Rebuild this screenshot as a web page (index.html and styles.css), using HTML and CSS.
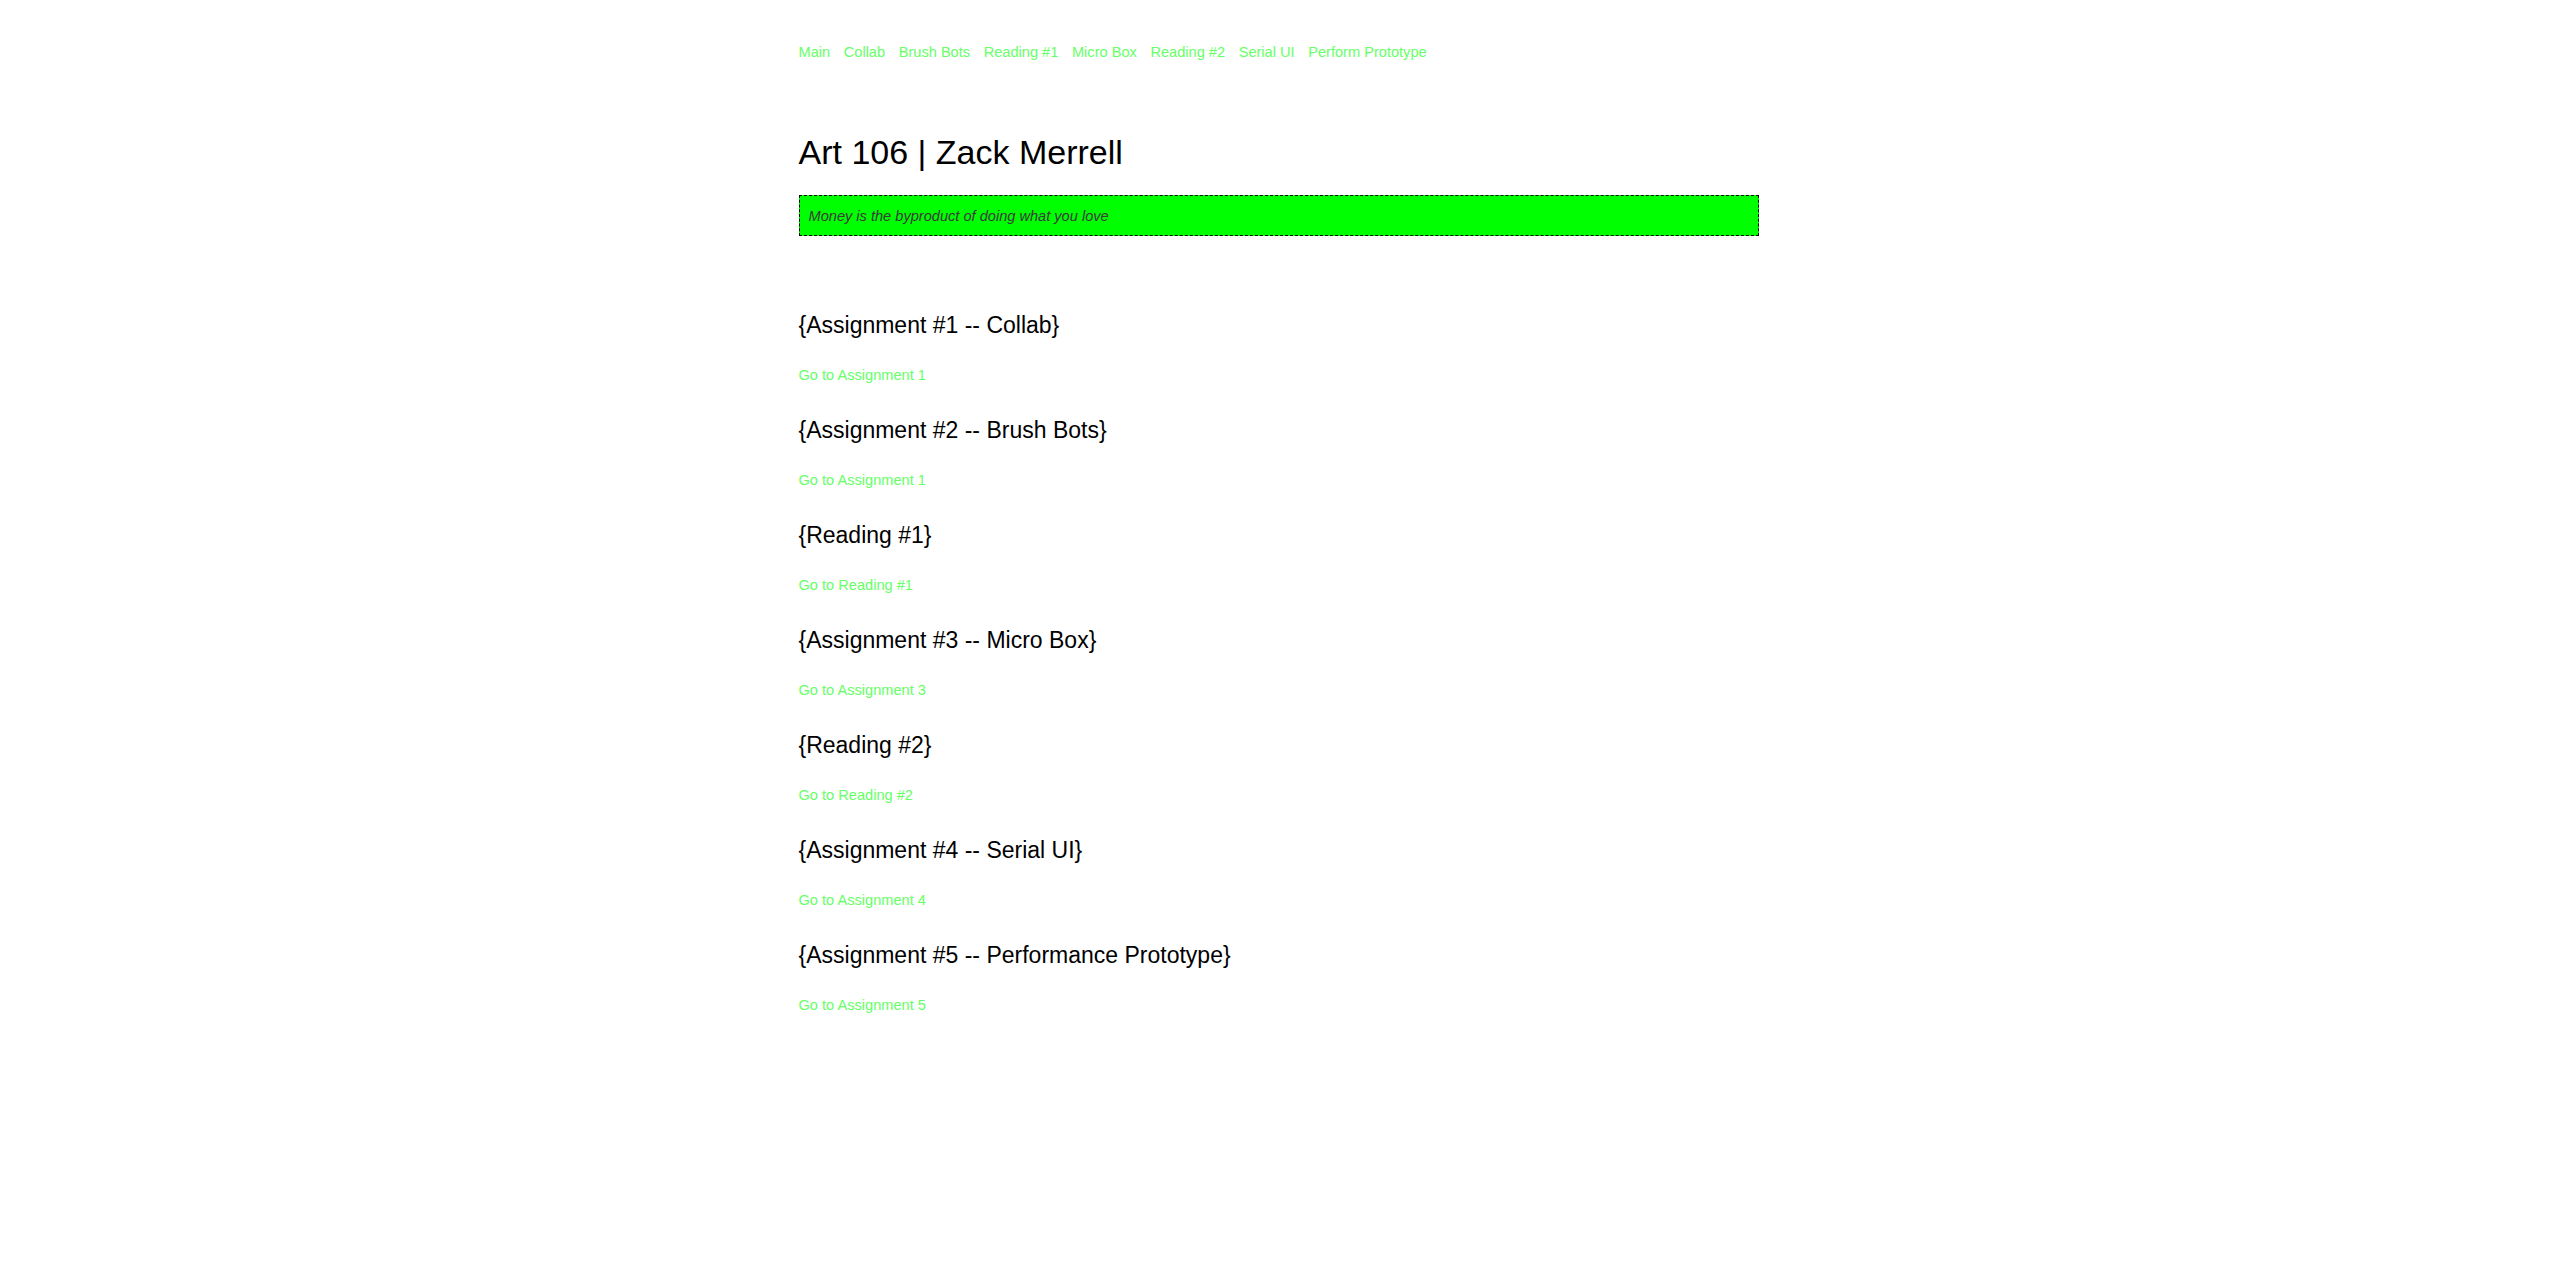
FILE: index.html
```html
<!DOCTYPE html>
<html lang="en">
<head>
<meta charset="utf-8">
<title>Art 106 | Zack Merrell</title>
<link rel="stylesheet" href="styles.css">
</head>
<body>
<div class="page">
  <nav class="nav">
    <a href="#">Main</a>
    <a href="#">Collab</a>
    <a href="#">Brush Bots</a>
    <a href="#">Reading #1</a>
    <a href="#">Micro Box</a>
    <a href="#">Reading #2</a>
    <a href="#">Serial UI</a>
    <a href="#">Perform Prototype</a>
  </nav>
  <h1 class="title">Art 106 | Zack Merrell</h1>
  <div class="motto"><p>Money is the byproduct of doing what you love</p></div>
  <main class="list">
    <section class="item">
      <h2>{Assignment #1 -- Collab}</h2>
      <p><a href="#">Go to Assignment 1</a></p>
    </section>
    <section class="item">
      <h2>{Assignment #2 -- Brush Bots}</h2>
      <p><a href="#">Go to Assignment 1</a></p>
    </section>
    <section class="item">
      <h2>{Reading #1}</h2>
      <p><a href="#">Go to Reading #1</a></p>
    </section>
    <section class="item">
      <h2>{Assignment #3 -- Micro Box}</h2>
      <p><a href="#">Go to Assignment 3</a></p>
    </section>
    <section class="item">
      <h2>{Reading #2}</h2>
      <p><a href="#">Go to Reading #2</a></p>
    </section>
    <section class="item">
      <h2>{Assignment #4 -- Serial UI}</h2>
      <p><a href="#">Go to Assignment 4</a></p>
    </section>
    <section class="item">
      <h2>{Assignment #5 -- Performance Prototype}</h2>
      <p><a href="#">Go to Assignment 5</a></p>
    </section>
  </main>
</div>
</body>
</html>
```
FILE: styles.css
```css
html, body {
  margin: 0;
  padding: 0;
  background: #ffffff;
}
body {
  font-family: "Liberation Sans", Arial, sans-serif;
  font-size: 14.6px;
  line-height: 1.2;
  color: #000;
}
.page {
  width: 960px;
  margin: 0 auto;
  padding-top: 44px;
  padding-bottom: 60px;
}
a {
  color: #66ff66;
  text-decoration: none;
}
.nav {
  display: flex;
  gap: 13.6px;
  font-size: 14.6px;
  line-height: 1.2;
}
.title {
  font-size: 34px;
  font-weight: normal;
  line-height: 1.2;
  margin: 70px 0 23px 0;
}
.motto {
  background: #00ff00;
  border: 1px dashed #000;
  padding: 11px 9px 10px 9px;
}
.motto p {
  margin: 0;
  font-style: italic;
  color: #3a3a3a;
  font-size: 14.6px;
  line-height: 18px;
}
.list {
  display: flex;
  flex-direction: column;
  gap: 32.3px;
  margin-top: 76px;
}
.item h2 {
  font-size: 23px;
  font-weight: normal;
  line-height: 1.2;
  margin: 0 0 27.5px 0;
}
.item p {
  margin: 0;
  font-size: 14.6px;
  line-height: 1.2;
}
```
